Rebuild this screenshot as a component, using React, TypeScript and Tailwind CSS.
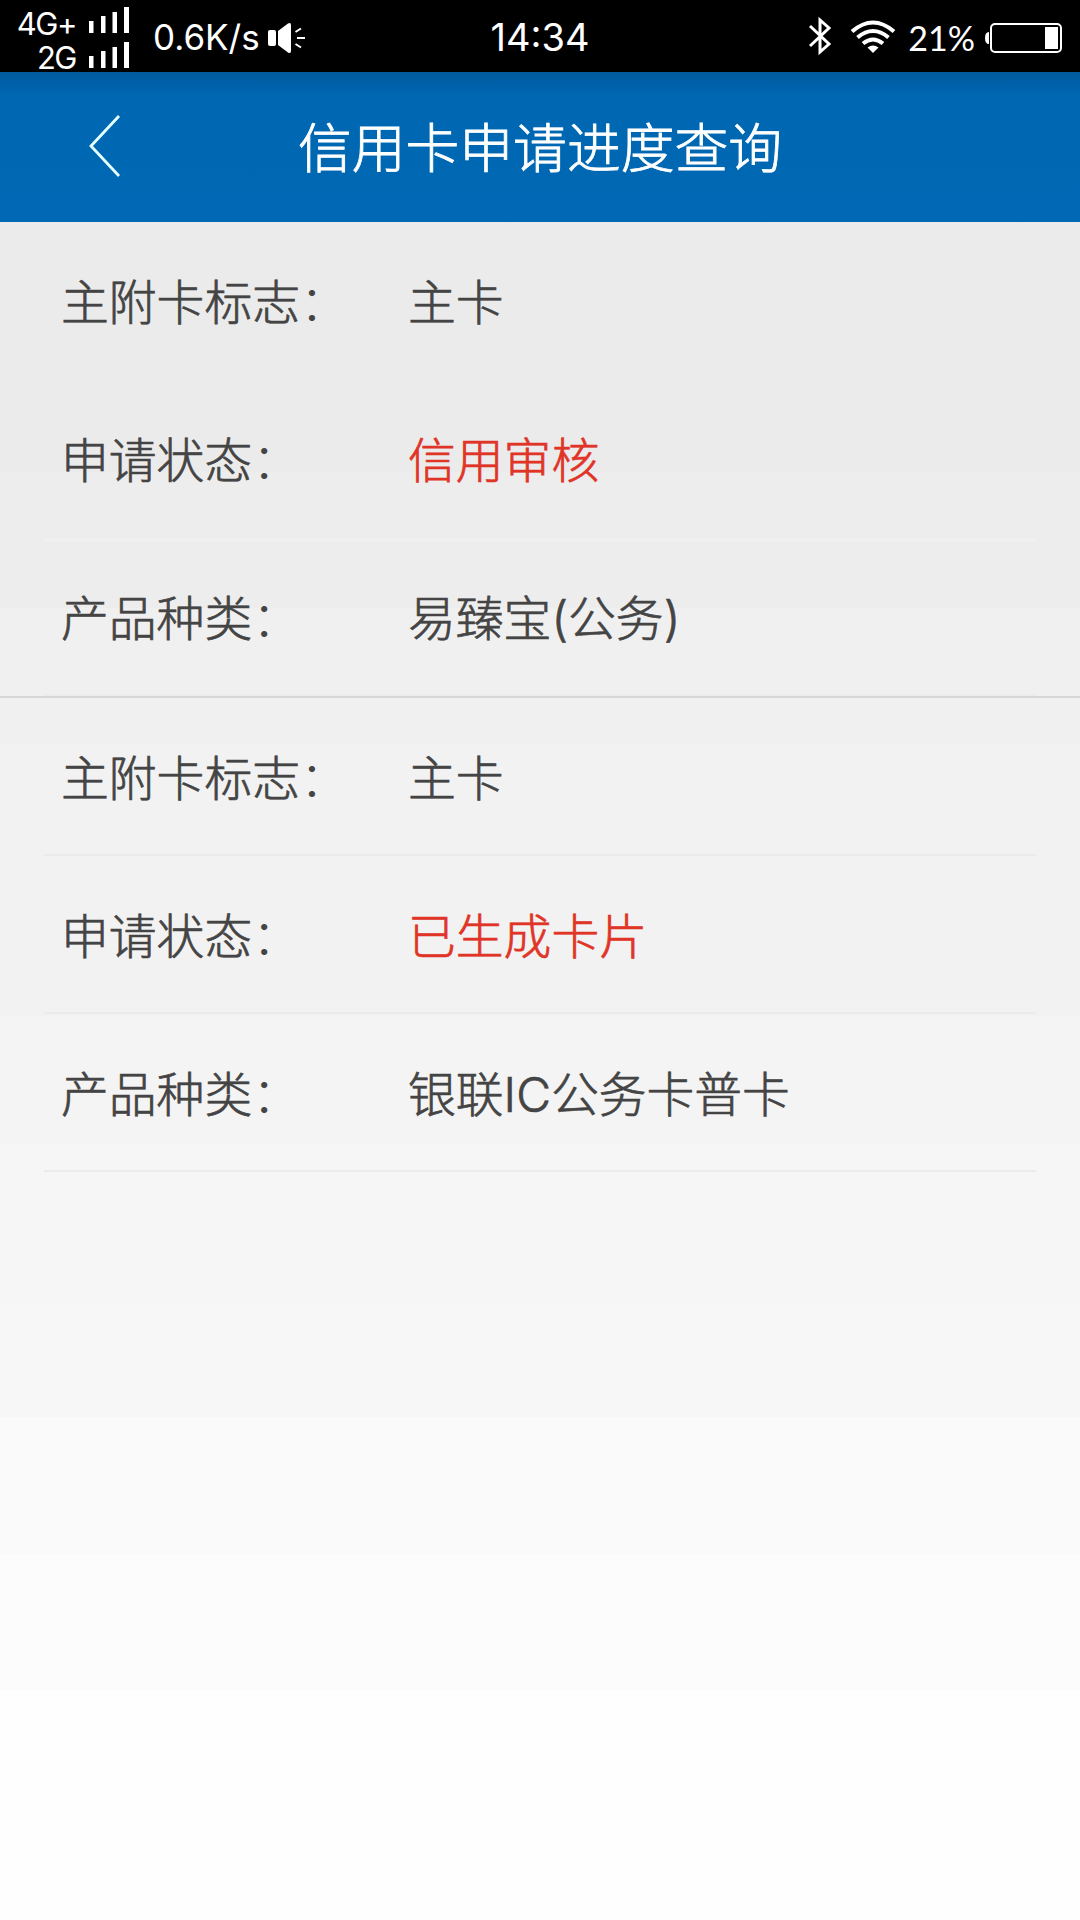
import React from "react";

const cards = [
  [
    { label: "主附卡标志", value: "主卡", red: false, line: "border-transparent" },
    { label: "申请状态", value: "信用审核", red: true, line: "border-transparent shadow-[0_4px_0_#f0f0f0]" },
    { label: "产品种类", value: "易臻宝(公务)", red: false, line: "border-[#ececec]" },
  ],
  [
    { label: "主附卡标志", value: "主卡", red: false, line: "border-[#ebebeb]" },
    { label: "申请状态", value: "已生成卡片", red: true, line: "border-[#ebebeb]" },
    { label: "产品种类", value: "银联IC公务卡普卡", red: false, line: "border-[#ebebeb]" },
  ],
];

function Signal() {
  return (
    <svg width="42" height="28" viewBox="0 0 42 28" fill="#fff">
      <rect x="1" y="14" width="4.5" height="12" />
      <rect x="13" y="9" width="4.5" height="17" />
      <rect x="24.5" y="5" width="4.5" height="21" />
      <rect x="36" y="0" width="5" height="26" />
    </svg>
  );
}

function StatusBar() {
  return (
    <div className="grid h-[72px] grid-cols-[1fr_auto_1fr] items-center bg-black text-white font-['Inter']">
      <div className="flex h-full items-center">
        <div className="flex h-full w-[76px] flex-col items-end pt-[7px] text-[31px] leading-[34px] tracking-[-1.5px]">
          <span className="whitespace-nowrap">4G+</span>
          <span className="whitespace-nowrap">2G</span>
        </div>
        <div className="ml-[12px] flex h-full flex-col gap-[7px] pt-[7px]">
          <Signal />
          <Signal />
        </div>
        <span className="ml-[23px] text-[35px]">0.6K/s</span>
        <svg className="ml-[8px]" width="38" height="32" viewBox="0 0 38 32" fill="#fff">
          <rect x="0" y="8" width="8" height="16" rx="2" />
          <path d="M10 9 20 1.5Q23 0 23 3V29Q23 32 20 30.500L10 23Z" />
          <path d="M27.500 10 33 6.500M29 16H37M27.500 22 33 25.500" stroke="#fff" strokeWidth="2" />
        </svg>
      </div>
      <span className="text-[38px]">14:34</span>
      <div className="flex items-center justify-end pr-[18px]">
        <svg className="-mt-1" width="24" height="40" viewBox="0 0 24 40" fill="none" stroke="#fff" strokeWidth="3">
          <path d="M2 10 21 28 12 36V4L21 12 2 30" />
        </svg>
        <svg className="ml-[18px] -mt-0.5" width="46" height="34" viewBox="0 0 46 34" fill="none" stroke="#fff" strokeWidth="4">
          <path d="M2 11.500Q23-6.500 44 11.500M7.500 17.500Q23 4.500 38.500 17.500M13 23.500Q23 15.500 33 23.500" />
          <path d="M17.500 27.500Q23 23.500 28.500 27.500L23 33Z" fill="#fff" stroke="none" />
        </svg>
        <span className="ml-[12px] text-[34px] leading-[40px] font-['Lato']">21%</span>
        <svg className="ml-[10px]" width="77" height="32" viewBox="0 0 77 32">
          <path d="M4 10Q0 10 0 16T4 22Z" fill="#fff" />
          <rect x="6" y="2" width="70" height="28" rx="4" fill="none" stroke="#fff" strokeWidth="2" />
          <rect x="60" y="5" width="13" height="22" fill="#fff" />
        </svg>
      </div>
    </div>
  );
}

export default function App() {
  return (
    <div className="flex h-[1920px] w-[1080px] flex-col overflow-hidden bg-white font-['Inter','Noto_Sans_CJK_SC',sans-serif]">
      <StatusBar />
      <header className="grid h-[150px] shrink-0 grid-cols-[120px_1fr_120px] items-center bg-[linear-gradient(#005a9e_0px,#0067b2_24px,#0068b4_100%)]">
        <svg className="mb-[3px] ml-[89px]" width="32" height="62" viewBox="0 0 32 62" fill="none" stroke="#e6ffff" strokeWidth="2.800">
          <path d="M30 1 2 31 30 61" />
        </svg>
        <h1 className="pt-1 text-center text-[53.8px] font-light text-white [-webkit-text-stroke:0.8px_#fff]">信用卡申请进度查询</h1>
      </header>
      <main className="flex-1 bg-[linear-gradient(#ebebeb_0px,#ebebeb_250px,#ededed_250px,#ededed_386px,#f0f0f0_386px,#f0f0f0_522px,#f2f2f2_522px,#f2f2f2_794px,#f4f4f4_794px,#f4f4f4_922px,#f6f6f6_922px,#f7f7f7_1195px,#fafafa_1195px,#fafafa_1332px,#fcfcfc_1332px,#fcfcfc_1468px,#fefefe_1468px)]">
        {cards.map((rows, i) => (
          <section key={i} className={i === 0 ? "h-[476px] border-b-2 border-[#d7d7d7]" : ""}>
            {rows.map((row, j) => (
              <div key={j} className={`mx-[44px] flex h-[158px] items-center border-b-2 pt-[7px] pl-[17px] text-[47.8px] font-light text-[#444] [-webkit-text-stroke:0.7px_currentColor] ${row.line}`}>
                <span className="w-[347px] whitespace-nowrap">
                  {row.label}
                  <span className="[-webkit-text-stroke:0px]">：</span>
                </span>
                <span className={row.red ? "text-[#e03427]" : ""}>{row.value}</span>
              </div>
            ))}
          </section>
        ))}
      </main>
    </div>
  );
}
